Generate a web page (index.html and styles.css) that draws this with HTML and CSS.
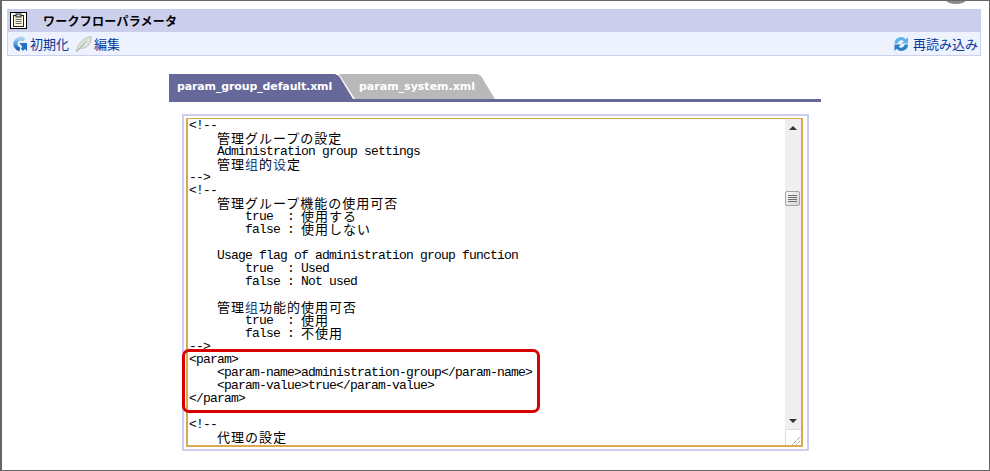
FILE: index.html
```html
<!DOCTYPE html>
<html lang="ja">
<head>
<meta charset="utf-8">
<title>ワークフローパラメータ</title>
<link rel="stylesheet" href="styles.css">
</head>
<body>
<div class="frame">
  <div class="blob"></div>
  <section class="panel">
    <header class="panel-head">
      <span class="head-icon">
        <svg width="15" height="15" viewBox="0 0 15 15"><rect x="2.500" y="2.500" width="10" height="11" fill="#fff8dc" stroke="#222"/><rect x="5" y="1" width="5" height="3" fill="#ccc" stroke="#222" stroke-width="1"/><path d="M4.500 6.500h6M4.500 8.500h6M4.500 10.500h6" stroke="#666"/></svg>
      </span>
      <h1 class="panel-title">ワークフローパラメータ</h1>
    </header>
    <nav class="toolbar">
      <a class="tool">
        <svg width="16" height="16" viewBox="0 0 16 16"><defs><linearGradient id="g1" x1="0" y1="0" x2="0" y2="1"><stop offset="0" stop-color="#a9d3f3"/><stop offset=".55" stop-color="#4a95dc"/><stop offset="1" stop-color="#1a5fb4"/></linearGradient></defs><path d="M12.300 3.800A5.400 5.400 0 1 0 7.800 13.200" fill="none" stroke="url(#g1)" stroke-width="4"/><path d="M7.500 7h7.500v8l-2.200-1.900-2 1.900-2-2.500 1.600-1.500z" fill="#1f6fc4"/></svg>
        <span class="tool-label">初期化</span>
      </a>
      <a class="tool">
        <svg width="17" height="16" viewBox="0 0 17 16"><path d="M1.500 15.500C2 9 7 2.500 16 .5c.5 6.500-3 11.500-9.500 11.800-1.800.1-3 1-4.300 3.400z" fill="#dfe5dc" stroke="#aeb9ae" stroke-width=".8"/><path d="M2 15 11.500 5" stroke="#8e9c8f" stroke-width=".8"/></svg>
        <span class="tool-label">編集</span>
      </a>
      <a class="tool tool-end">
        <svg width="17" height="16" viewBox="0 0 17 16"><path d="M.500 7.500A6.500 6.500 0 0 1 11.800 3.300L14 1v6.500H7.500l2.400-2.300A3.800 3.800 0 0 0 3.800 7.500z" fill="#5fb2e6"/><path d="M14 8.500A6.500 6.500 0 0 1 2.700 12.700L.500 15V8.500H7L4.600 10.800A3.800 3.800 0 0 0 10.700 8.500z" fill="#2a7fc9"/></svg>
        <span class="tool-label">再読み込み</span>
      </a>
    </nav>
  </section>

  <main class="content">
    <div class="tabs">
      <div class="tab tab-active">param_group_default.xml</div>
      <div class="tab tab-idle">param_system.xml</div>
    </div>

    <div class="editor">
      <div class="editor-inner">
<pre class="code">&lt;!--
    <span class="j">管理グループの設定</span>
    Administration group settings
    <span class="j">管理<i class="fb">组</i>的<i class="fb">设</i>定</span>
--&gt;
&lt;!--
    <span class="j">管理グループ機能の使用可否</span>
        true  : <span class="j">使用する</span>
        false : <span class="j">使用しない</span>

    Usage flag of administration group function
        true  : Used
        false : Not used

    <span class="j">管理<i class="fb">组</i>功能的使用可否</span>
        true  : <span class="j">使用</span>
        false : <span class="j">不使用</span>
--&gt;
&lt;param&gt;
    &lt;param-name&gt;administration-group&lt;/param-name&gt;
    &lt;param-value&gt;true&lt;/param-value&gt;
&lt;/param&gt;

&lt;!--
    <span class="j">代理の設定</span>
    Proxy settings
</pre>
        <div class="scrollbar">
          <div class="sb-btn"><span class="arrow-up"></span></div>
          <div class="sb-track">
            <div class="sb-thumb"><span class="grip"></span><span class="grip"></span><span class="grip"></span><span class="grip"></span></div>
          </div>
          <div class="sb-btn"><span class="arrow-down"></span></div>
          <div class="sb-corner">
            <svg width="16" height="16" viewBox="0 0 16 16"><path d="M6.500 14.500 14.500 6.500M10.500 14.500l4-4" stroke="#777" stroke-dasharray="1 1" fill="none"/></svg>
          </div>
        </div>
      </div>
      <div class="highlight"></div>
    </div>
  </main>
</div>
</body>
</html>
```

FILE: styles.css
```css
html, body {
  margin: 0;
  padding: 0;
  background: #fff;
}
.frame {
  position: relative;
  box-sizing: border-box;
  width: 990px;
  height: 471px;
  overflow: hidden;
  border-style: solid;
  border-color: #666;
  border-width: 1px 1px 1px 2px;
  padding: 8px 8px 0 5px;
  background: #fff;
}
.blob {
  position: absolute;
  top: -6px;
  left: 944px;
  width: 20px;
  height: 9px;
  border-radius: 50%;
  background: #8a8a8a;
}
.panel {
  width: 974px;
  box-sizing: border-box;
  border: 1px solid #cdd0ea;
  border-top: 0;
  font-family: "Noto Sans CJK JP", sans-serif;
}
.panel-head {
  display: flex;
  align-items: center;
  height: 23px;
  margin: 0 -1px;
  background: #cccfeb;
}
.head-icon {
  display: flex;
  align-items: center;
  justify-content: center;
  box-sizing: border-box;
  width: 17px;
  height: 17px;
  margin-left: 3px;
  border: 1px solid #000;
  background: #fff;
}
.panel-title {
  margin: 0 0 0 16px;
  font-size: 12px;
  letter-spacing: .25px;
  font-weight: 700;
  line-height: 16px;
  color: #000;
}
.toolbar {
  display: flex;
  align-items: center;
  height: 23px;
  padding: 0 2px 0 4px;
  background: #eef1fe;
  gap: 6px;
}
.tool {
  display: flex;
  align-items: center;
  gap: 2px;
  color: #063a9a;
}
.tool-end {
  margin-left: auto;
}
.tool-label {
  font-size: 13px;
  line-height: 16px;
  white-space: nowrap;
}
.content {
  margin: 18px 0 0 162px;
  width: 652px;
}
.tabs {
  display: flex;
  height: 28px;
  box-sizing: border-box;
  border-bottom: 3px solid #67689a;
  font-family: "DejaVu Sans", sans-serif;
  font-weight: bold;
  font-size: 11px;
  color: #fff;
}
.tab {
  display: flex;
  align-items: center;
  box-sizing: border-box;
  height: 25px;
  line-height: 25px;
  white-space: nowrap;
}
.tab-active {
  width: 184px;
  padding-left: 8px;
  letter-spacing: -.13px;
  background: #67689a;
  clip-path: polygon(0 0, 166px 0, 170px 2px, 184px 25px, 0 25px);
}
.tab-idle {
  width: 157px;
  margin-left: -14px;
  padding-left: 20px;
  background: #b9b9b9;
  clip-path: polygon(0 0, 138px 0, 142px 2px, 156px 25px, 16px 25px);
}
.editor {
  position: relative;
  box-sizing: border-box;
  width: 627px;
  height: 337px;
  margin: 12px 0 0 13px;
  border: 2px solid #cdcdf0;
  padding: 2px 4px 2px 2px;
}
.editor-inner {
  display: flex;
  box-sizing: border-box;
  height: 100%;
  overflow: hidden;
  border: solid #d9a94f;
  border-width: 1px 2px 2px 2px;
}
.code {
  flex: 1;
  margin: 0;
  padding: 0 0 0 1px;
  overflow: hidden;
  font-family: "Liberation Mono", monospace;
  font-size: 13px;
  letter-spacing: -.8px;
  line-height: 13px;
  color: #000;
}
.j {
  font-family: "Noto Sans CJK JP", sans-serif;
  font-size: 13px;
  letter-spacing: 1px;
  line-height: 1px;
  vertical-align: -1px;
}
.fb {
  font-style: normal;
  color: #1c3f7a;
}
.scrollbar {
  display: flex;
  flex-direction: column;
  flex: none;
  width: 16px;
  background: #efefef;
}
.sb-btn {
  display: flex;
  align-items: center;
  justify-content: center;
  flex: none;
  height: 17px;
}
.arrow-up, .arrow-down {
  width: 0;
  height: 0;
  border-left: 4px solid transparent;
  border-right: 4px solid transparent;
}
.arrow-up {
  border-bottom: 4px solid #333;
}
.arrow-down {
  border-top: 4px solid #333;
}
.sb-track {
  flex: 1;
  padding-top: 55px;
}
.sb-thumb {
  display: flex;
  flex-direction: column;
  justify-content: center;
  gap: 1px;
  box-sizing: border-box;
  width: 15px;
  height: 15px;
  padding: 0 2px;
  border: 1px solid #a4a4a4;
  border-radius: 2px;
  background: linear-gradient(135deg, #f8f8f8, #d6d6d6);
}
.grip {
  height: 1px;
  background: #6e6e6e;
}
.sb-corner {
  flex: none;
  height: 16px;
  background: #fff;
  border-top: 1px solid #ddd;
  border-left: 1px solid #ddd;
  margin-bottom: -1px;
}
.sb-corner svg {
  display: block;
}
.highlight {
  position: absolute;
  left: -2px;
  top: 233px;
  width: 358px;
  height: 64px;
  box-sizing: border-box;
  border: 3px solid #d90000;
  border-radius: 7px;
}
```
